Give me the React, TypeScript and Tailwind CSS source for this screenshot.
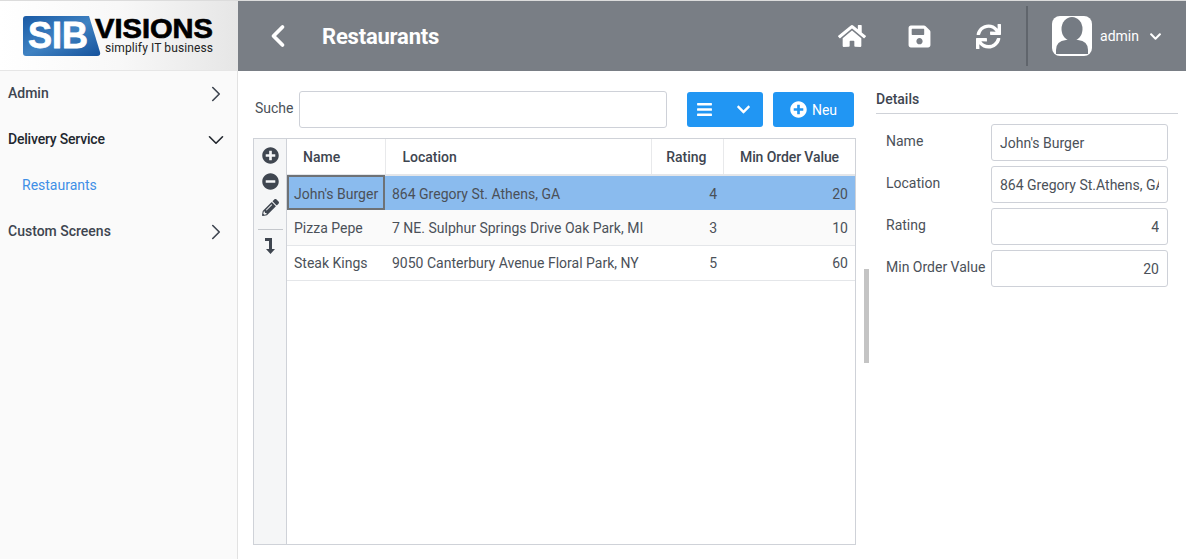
import { FaHome, FaSave, FaSync, FaPlusCircle, FaMinusCircle, FaPencilAlt, FaBars, FaChevronDown } from "react-icons/fa";
import { ChevronLeft, ChevronRight, ChevronDown } from "lucide-react";

const rows = [
    { name: "John's Burger", location: "864 Gregory St. Athens, GA", rating: 4, min: 20 },
    { name: "Pizza Pepe", location: "7 NE. Sulphur Springs Drive Oak Park, MI", rating: 3, min: 10 },
    { name: "Steak Kings", location: "9050 Canterbury Avenue Floral Park, NY", rating: 5, min: 60 },
];

const fields = [
    { label: "Name", value: "John's Burger", right: false },
    { label: "Location", value: "864 Gregory St.Athens, GA", right: false },
    { label: "Rating", value: "4", right: true },
    { label: "Min Order Value", value: "20", right: true },
];

function Logo() {
    return (
        <svg width="192" height="42" viewBox="0 0 192 42">
            <defs>
                <linearGradient id="logoBlue" x1="0" y1="0" x2="1" y2="1">
                    <stop offset="0" stopColor="#1a5aa5" />
                    <stop offset="0.5" stopColor="#3f82c2" />
                    <stop offset="1" stopColor="#15529c" />
                </linearGradient>
            </defs>
            <path d="M3 1 H66 L77 37 Q78 41 74 41 H3 Q0 41 0 38 V4 Q0 1 3 1 Z" fill="url(#logoBlue)" />
            <text x="5" y="33" fontFamily="Liberation Sans" fontWeight="700" fontSize="36" fill="#ffffff" stroke="#ffffff" strokeWidth="0.8" textLength="60" lengthAdjust="spacingAndGlyphs">SIB</text>
            <text x="72" y="23" fontFamily="Liberation Sans" fontWeight="700" fontSize="28" fill="#000000" stroke="#000000" strokeWidth="0.7" textLength="118" lengthAdjust="spacingAndGlyphs">VISIONS</text>
            <text x="82" y="37" fontFamily="Roboto" fontSize="12" fill="#222222" textLength="108" lengthAdjust="spacing">simplify IT business</text>
        </svg>
    );
}

function Avatar() {
    return (
        <svg width="40" height="40" viewBox="0 0 40 40">
            <rect width="40" height="40" rx="8" fill="#ffffff" />
            <ellipse cx="20" cy="13" rx="10.5" ry="12" fill="#757b83" />
            <path d="M4 38 V34 Q4 25 14 24 H26 Q36 25 36 34 V38 Z" fill="#757b83" />
        </svg>
    );
}

function SortIcon() {
    return (
        <svg width="12" height="16" viewBox="0 0 12 16" fill="#3f4650">
            <path d="M1 0 H8 V11 H11 L6.5 16 L2 11 H5 V3 H1 Z" />
        </svg>
    );
}

function MenuItem({ label, open }: { label: string; open?: boolean }) {
    return (
        <div className="flex h-[46px] items-center justify-between pl-2 pr-2 text-[#3e4550]">
            <span className={open ? "mb-[2px] text-sm font-medium tracking-[-0.2px] text-[#22272e]" : "mb-[2px] text-sm font-medium"}>{label}</span>
            {open ? <ChevronDown size={26} strokeWidth={1.5} className="text-[#22272e]" /> : <ChevronRight size={26} strokeWidth={1.5} />}
        </div>
    );
}

export default function App() {
    return (
        <div className="flex h-[559px] w-[1186px] flex-col overflow-hidden bg-white font-['Roboto',sans-serif] text-sm text-[#4b5159]">
            <header className="flex h-[71px] shrink-0 border-t border-[#dcdcdc]">
                <div className="flex w-[238px] shrink-0 items-center justify-center border-b border-[#e6e6e6] bg-gradient-to-r from-white via-[#f8f8f8] to-[#e6e6e6]">
                    <Logo />
                </div>
                <div className="flex flex-1 items-center bg-[#797e85] text-white">
                    <ChevronLeft size={36} strokeWidth={2.5} className="ml-[22px]" />
                    <h1 className="ml-[26px] mt-[2px] text-[22px] font-bold tracking-[-0.2px]">Restaurants</h1>
                    <div className="ml-auto flex items-center">
                        <FaHome size={28} />
                        <FaSave size={25} className="ml-[41px]" />
                        <FaSync size={25} className="ml-[44px]" />
                        <div className="ml-[25px] h-[60px] w-[2px] bg-[#60656c]" />
                        <div className="ml-[24px]"><Avatar /></div>
                        <span className="ml-2 text-sm">admin</span>
                        <FaChevronDown size={13} className="ml-[10px] mr-[24px]" />
                    </div>
                </div>
            </header>

            <div className="flex min-h-0 flex-1">
                <aside className="w-[238px] shrink-0 border-r border-[#e2e2e2] bg-[#fafafa]">
                    <MenuItem label="Admin" />
                    <MenuItem label="Delivery Service" open />
                    <div className="flex h-[46px] items-center pl-[22px] text-sm text-[#3f8fe6]">
                        <span className="mb-[2px]">Restaurants</span>
                    </div>
                    <MenuItem label="Custom Screens" />
                </aside>

                <main className="relative flex min-w-0 flex-1 pl-[15px]">
                    <section className="flex w-[603px] shrink-0 flex-col pt-5 pb-[14px]">
                        <div className="flex h-[37px] items-center">
                            <label className="mb-1 ml-[2px] w-[44px] text-sm">Suche</label>
                            <div className="h-[37px] w-[368px] rounded-[3px] border border-[#ced1d8] bg-white" />
                            <button className="ml-5 flex h-[35px] w-[76px] items-center justify-between rounded-[3px] bg-[#2196f3] pl-[9px] pr-[12px] text-white">
                                <FaBars size={17} />
                                <FaChevronDown size={15} />
                            </button>
                            <button className="ml-[10px] flex h-[35px] w-[81px] items-center justify-center gap-[5px] rounded-[3px] bg-[#2196f3] text-sm text-white">
                                <FaPlusCircle size={17} />
                                Neu
                            </button>
                        </div>

                        <div className="mt-[10px] flex min-h-0 flex-1 border border-[#cfd2d8]">
                            <div className="flex w-[33px] shrink-0 flex-col items-center border-r border-[#cfd2d8] bg-[#f5f6f7] pt-2 text-[#3f4650]">
                                <FaPlusCircle size={17} />
                                <FaMinusCircle size={17} className="mt-[9px]" />
                                <FaPencilAlt size={17} className="mt-[9px]" />
                                <div className="mt-[13px] h-px w-[25px] bg-[#c4c7cc]" />
                                <div className="mt-[8px]"><SortIcon /></div>
                            </div>
                            <div className="min-w-0 flex-1">
                                <table className="w-[568px] table-fixed border-collapse text-sm">
                                    <colgroup>
                                        <col className="w-[98px]" />
                                        <col className="w-[266px]" />
                                        <col className="w-[72px]" />
                                        <col className="w-[132px]" />
                                    </colgroup>
                                    <thead>
                                        <tr className="h-[36px] border-b-2 border-[#e4e6e9] text-[#3e4550]">
                                            <th className="border-r border-[#e8e9eb] pl-4 text-left font-medium">Name</th>
                                            <th className="border-r border-[#e8e9eb] pl-[17px] text-left font-medium">Location</th>
                                            <th className="border-r border-[#e8e9eb] pr-4 text-right font-medium">Rating</th>
                                            <th className="pr-4 text-right font-medium tracking-[-0.1px]">Min Order Value</th>
                                        </tr>
                                    </thead>
                                    <tbody>
                                        {rows.map((row, i) => (
                                            <tr
                                                key={row.name}
                                                className={
                                                    i === 0
                                                        ? "h-[35px] bg-[#8abbee] text-[#4a5058]"
                                                        : i === 1
                                                          ? "h-[35px] border-b border-[#e4e6e9] bg-[#fafafa]"
                                                          : "h-[35px] border-b border-[#e4e6e9] bg-white"
                                                }
                                            >
                                                <td className={i === 0 ? "whitespace-nowrap pl-[7px] pt-[2px] outline-2 -outline-offset-2 outline-[#6e7276]" : i === 1 ? "whitespace-nowrap pl-[7px] pt-[2px]" : "whitespace-nowrap pl-[7px]"}>
                                                    {row.name}
                                                </td>
                                                <td className={i === 2 ? "truncate pl-[7px]" : "truncate pl-[7px] pt-[2px]"}>{row.location}</td>
                                                <td className={i === 2 ? "pr-[6px] text-right" : "pr-[6px] pt-[2px] text-right"}>{row.rating}</td>
                                                <td className={i === 2 ? "pr-[7px] text-right" : "pr-[7px] pt-[2px] text-right"}>{row.min}</td>
                                            </tr>
                                        ))}
                                    </tbody>
                                </table>
                            </div>
                        </div>
                    </section>

                    {/* splitter handle */}
                    <div className="absolute left-[626px] top-[198px] h-[94px] w-[5px] bg-[#c4c4c4]" />

                    <section className="ml-5 w-[302px] pt-[20px]">
                        <h2 className="h-[23px] border-b border-[#cfd2d8] text-sm leading-[17px] font-medium text-[#3e4550]">Details</h2>
                        <div className="mt-[10px] flex flex-col gap-[5px]">
                            {fields.map((f) => (
                                <div key={f.label} className="flex h-[37px]">
                                    <label className="w-[115px] whitespace-nowrap pl-[10px] pt-[7px] text-sm">{f.label}</label>
                                    <div className="flex h-[37px] w-[177px] items-center overflow-hidden rounded-[3px] border border-[#ced1d8] px-2 pt-[1px] text-sm">
                                        <span className={f.right ? "block w-full overflow-hidden whitespace-nowrap text-right" : "block w-full overflow-hidden whitespace-nowrap"}>{f.value}</span>
                                    </div>
                                </div>
                            ))}
                        </div>
                    </section>
                </main>
            </div>
        </div>
    );
}
